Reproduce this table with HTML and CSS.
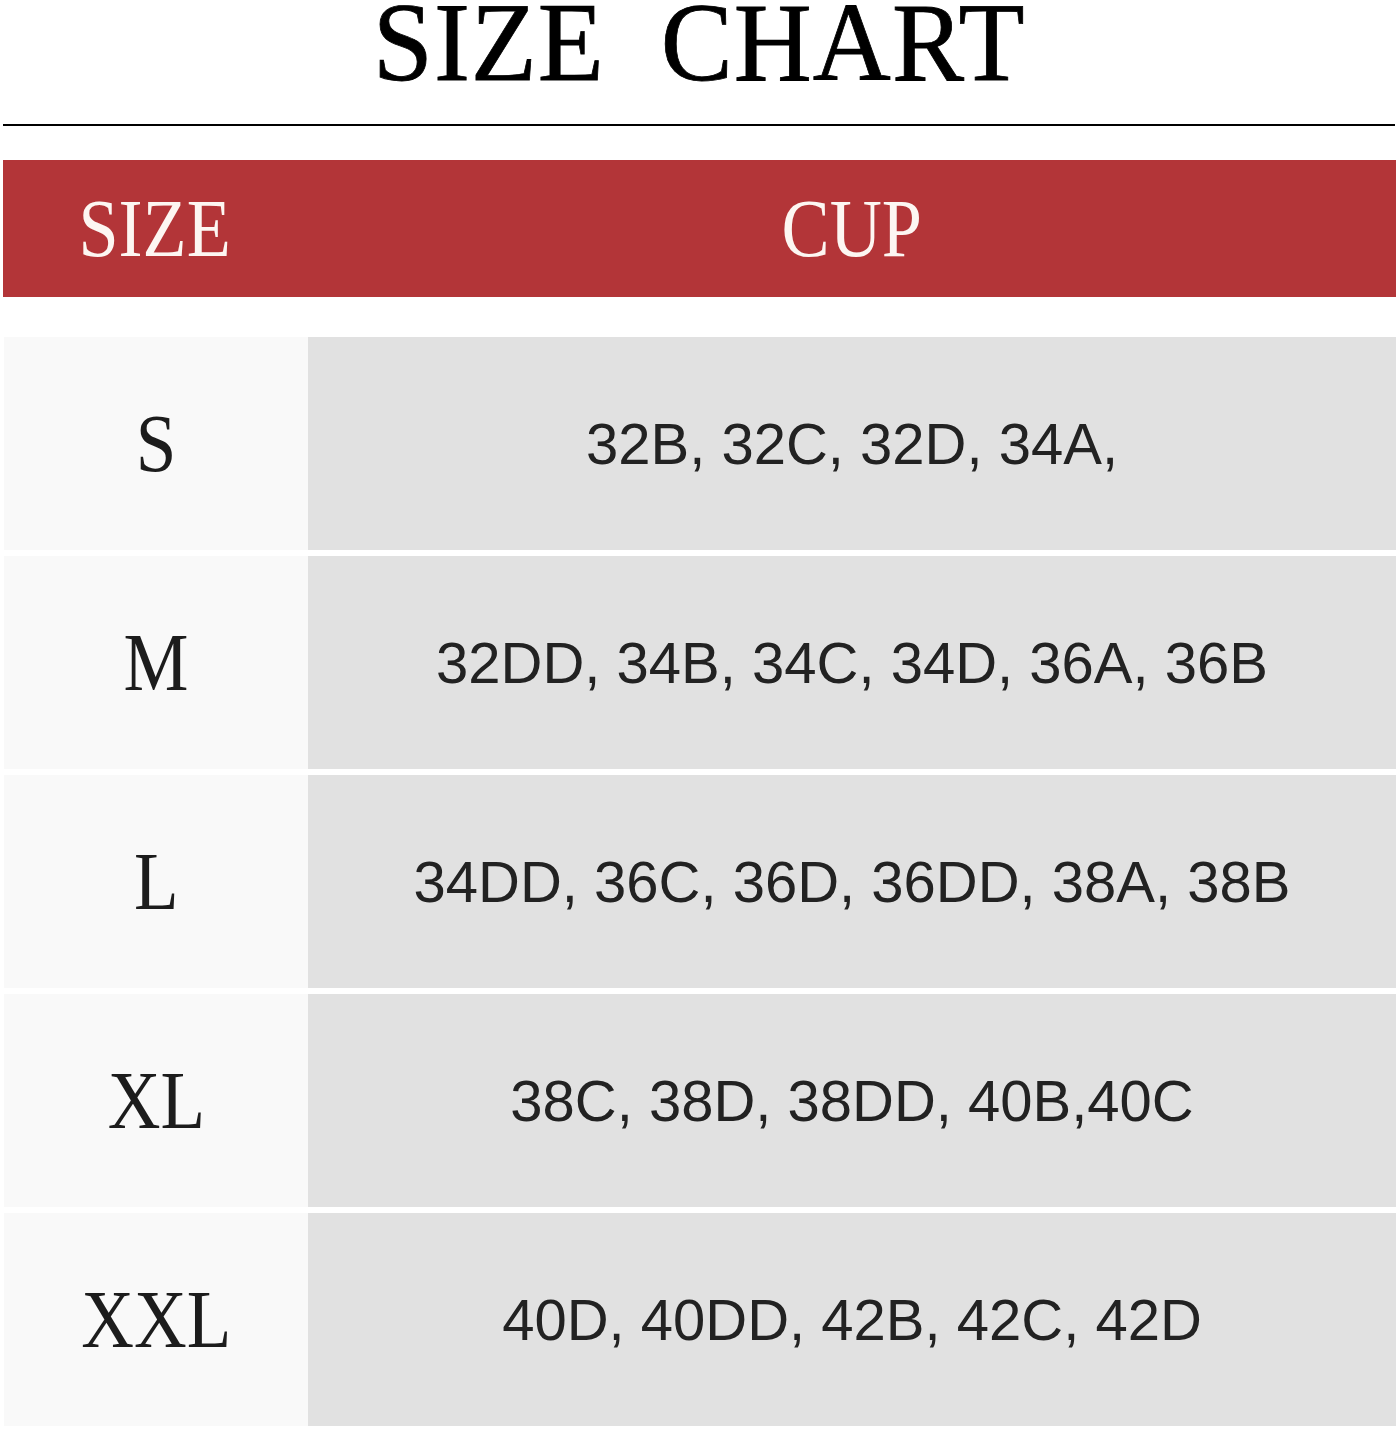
FILE: index.html
```html
<!DOCTYPE html>
<html lang="en">
<head>
<meta charset="utf-8">
<title>Size Chart</title>
<link rel="stylesheet" href="styles.css">
</head>
<body>
<div class="page">
  <div class="title"><span class="squeeze title-text">SIZE&nbsp; CHART</span></div>
  <div class="head">
    <div class="head-cell"><span class="squeeze">SIZE</span></div>
    <div class="head-cell"><span class="squeeze">CUP</span></div>
  </div>
  <div class="rows">
    <div class="row"><div class="size"><span class="squeeze">S</span></div><div class="cup">32B, 32C, 32D, 34A,</div></div>
    <div class="row"><div class="size"><span class="squeeze">M</span></div><div class="cup">32DD, 34B, 34C, 34D, 36A, 36B</div></div>
    <div class="row"><div class="size"><span class="squeeze">L</span></div><div class="cup">34DD, 36C, 36D, 36DD, 38A, 38B</div></div>
    <div class="row"><div class="size"><span class="squeeze">XL</span></div><div class="cup">38C, 38D, 38DD, 40B,40C</div></div>
    <div class="row"><div class="size"><span class="squeeze">XXL</span></div><div class="cup">40D, 40DD, 42B, 42C, 42D</div></div>
  </div>
</div>
</body>
</html>
```

FILE: styles.css
```css
* { box-sizing: border-box; }
html, body { margin: 0; padding: 0; background: #ffffff; }
body { width: 1399px; height: 1431px; overflow: hidden; }

.page {
  padding: 0 3px 0 3px;
  width: 1399px;
}

.squeeze {
  display: inline-block;
  transform: scaleX(0.88);
  transform-origin: center;
  white-space: nowrap;
}

.title {
  height: 126px;
  border-bottom: 2px solid #000;
  text-align: center;
  font-family: "Liberation Serif", "Times New Roman", serif;
  font-size: 112px;
  line-height: 84px;
  color: #000;
  margin-right: 1px;
}
.title-text {
  transform: scaleX(0.965);
  letter-spacing: 1px;
  -webkit-text-stroke: 0.8px #000;
}

.head {
  margin-top: 34px;
  height: 137px;
  background: #b33538;
  display: grid;
  grid-template-columns: 304px 1fr;
}
.head-cell {
  display: flex;
  align-items: center;
  justify-content: center;
  font-family: "Liberation Serif", "Times New Roman", serif;
  font-size: 82px;
  line-height: 1;
  color: #fdf6f2;
}

.rows {
  margin-top: 40px;
  display: grid;
  grid-template-rows: repeat(5, 213px);
  row-gap: 6px;
  padding-left: 1px;
}
.row {
  display: grid;
  grid-template-columns: 304px 1fr;
}
.size {
  background: #f9f9f9;
  display: flex;
  align-items: center;
  justify-content: center;
  font-family: "Liberation Serif", "Times New Roman", serif;
  font-size: 83px;
  line-height: 1;
  color: #1c1c1c;
}
.cup {
  background: #e1e1e1;
  display: flex;
  align-items: center;
  justify-content: center;
  font-family: "Liberation Sans", Arial, sans-serif;
  font-size: 58px;
  line-height: 1;
  color: #222222;
}
```
